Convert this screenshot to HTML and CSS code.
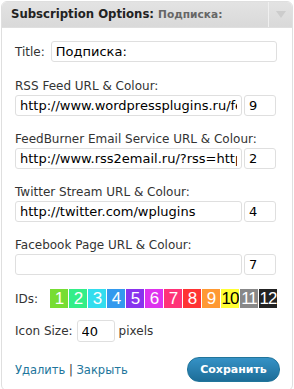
FILE: index.html
```html
<!DOCTYPE html>
<html lang="ru">
<head>
    <meta charset="UTF-8">
    <title>Subscription Options</title>
    <link rel="stylesheet" href="styles.css">
</head>
<body>
<div class="widget">
    <div class="widget-top">
        <h4 class="widget-title">Subscription Options: <span class="in-widget-title">Подписка:</span></h4>
        <a class="widget-toggle" href="#"><span class="arrow"></span></a>
    </div>
    <form class="widget-inside">
        <div class="title-row">
            <label for="title">Title:</label>
            <input type="text" id="title" class="wide" value="Подписка:">
        </div>

        <div class="field">
            <label for="rss">RSS Feed URL &amp; Colour:</label>
            <div class="pair">
                <input type="text" id="rss" class="url" value="http://www.wordpressplugins.ru/feed/">
                <input type="text" class="colour" value="9">
            </div>
        </div>

        <div class="field">
            <label for="email">FeedBurner Email Service URL &amp; Colour:</label>
            <div class="pair">
                <input type="text" id="email" class="url" value="http://www.rss2email.ru/?rss=http://www.wordpressplugins.ru/feed/">
                <input type="text" class="colour" value="2">
            </div>
        </div>

        <div class="field">
            <label for="twitter">Twitter Stream URL &amp; Colour:</label>
            <div class="pair">
                <input type="text" id="twitter" class="url" value="http://twitter.com/wplugins">
                <input type="text" class="colour" value="4">
            </div>
        </div>

        <div class="field">
            <label for="facebook">Facebook Page URL &amp; Colour:</label>
            <div class="pair">
                <input type="text" id="facebook" class="url" value="">
                <input type="text" class="colour" value="7">
            </div>
        </div>

        <div class="ids-row">
            <span class="ids-label">IDs:</span>
            <div class="swatches">
                <span class="swatch c1">1</span>
                <span class="swatch c2">2</span>
                <span class="swatch c3">3</span>
                <span class="swatch c4">4</span>
                <span class="swatch c5">5</span>
                <span class="swatch c6">6</span>
                <span class="swatch c7">7</span>
                <span class="swatch c8">8</span>
                <span class="swatch c9">9</span>
                <span class="swatch c10">10</span>
                <span class="swatch c11">11</span>
                <span class="swatch c12">12</span>
            </div>
        </div>

        <div class="size-row">
            <label for="size">Icon Size:</label>
            <input type="text" id="size" class="size" value="40">
            <span>pixels</span>
        </div>

        <div class="control-actions">
            <div class="links">
                <a href="#">Удалить</a> | <a href="#">Закрыть</a>
            </div>
            <button type="submit" class="button-primary">Сохранить</button>
        </div>
    </form>
</div>
</body>
</html>
```

FILE: styles.css
```css
body {
    margin: 1px 0 0 1px;
    background-color: #ffffff;
    font-family: 'DejaVu Sans', Verdana, sans-serif;
    font-size: 12px;
    color: #333333;
}

.widget {
    width: 292px;
    box-sizing: border-box;
    border: 1px solid #dfdfdf;
    border-radius: 6px;
    background-color: #ffffff;
}

.widget-top {
    display: flex;
    height: 25px;
    background: linear-gradient(to bottom, #e3e3e3, #d9d9d9);
    border-bottom: 1px solid #dfdfdf;
    border-radius: 5px 5px 0 0;
}

.widget-title {
    flex: 1;
    margin: 0;
    padding: 0 0 0 9px;
    line-height: 25px;
    font-size: 11.7px;
    font-weight: bold;
    color: #222222;
    white-space: nowrap;
    overflow: hidden;
}

.in-widget-title {
    font-size: 10.6px;
    color: #666666;
}

.widget-toggle {
    width: 23px;
    border-left: 1px solid #f0f0f0;
    display: flex;
    justify-content: center;
    align-items: center;
}

.arrow {
    width: 0;
    height: 0;
    border-left: 5px solid transparent;
    border-right: 5px solid transparent;
    border-top: 7px solid #cccccc;
}

.widget-inside {
    padding: 13px 15px 8px 13px;
}

input {
    box-sizing: border-box;
    height: 21px;
    border: 1px solid #dfdfdf;
    border-radius: 3px;
    padding: 0 4px;
    font-family: 'DejaVu Sans', Verdana, sans-serif;
    font-size: 13px;
    color: #000000;
    background-color: #ffffff;
    outline: none;
}

.title-row {
    display: flex;
    align-items: center;
    gap: 6px;
    margin-bottom: 16px;
}

.title-row input {
    flex: 1;
}

.field {
    margin-bottom: 15px;
}

.field label {
    display: block;
    line-height: 16px;
    margin-bottom: 1px;
}

.pair {
    display: flex;
    gap: 2px;
}

.pair .url {
    width: 227px;
}

.pair .colour {
    width: 32px;
}

.ids-row {
    display: flex;
    align-items: center;
    margin-top: -1px;
    margin-bottom: 12px;
}

.ids-label {
    width: 35px;
}

.swatches {
    display: flex;
    gap: 1px;
}

.swatch {
    width: 18px;
    height: 19px;
    line-height: 19px;
    text-align: center;
    color: #ffffff;
    font-family: 'Liberation Sans', Arial, sans-serif;
    font-size: 17px;
    letter-spacing: -1px;
    overflow: hidden;
}

.c1 { background-color: #77dd33; }
.c2 { background-color: #33ee88; }
.c3 { background-color: #33ddee; }
.c4 { background-color: #3399ee; }
.c5 { background-color: #8833ee; }
.c6 { background-color: #dd33ee; }
.c7 { background-color: #ff3377; }
.c8 { background-color: #ff3333; }
.c9 { background-color: #ff9933; }
.c10 { background-color: #ffff33; color: #000000; }
.c11 { background-color: #888888; }
.c12 { background-color: #222222; }

.size-row {
    display: flex;
    align-items: center;
    gap: 4px;
    margin-bottom: 15px;
}

.size-row .size {
    width: 38px;
    height: 22px;
}

.control-actions {
    display: flex;
    justify-content: space-between;
    align-items: center;
}

.links {
    color: #333333;
    font-size: 11.5px;
}

.links a {
    color: #21759b;
    text-decoration: none;
}

.button-primary {
    width: 93px;
    height: 25px;
    margin-right: -3px;
    border: 1px solid #21759b;
    border-radius: 12px;
    background: linear-gradient(to bottom, #3592c6, #1d6d98);
    color: #ffffff;
    font-family: 'DejaVu Sans', Verdana, sans-serif;
    font-size: 11px;
    font-weight: bold;
    cursor: pointer;
}
```
